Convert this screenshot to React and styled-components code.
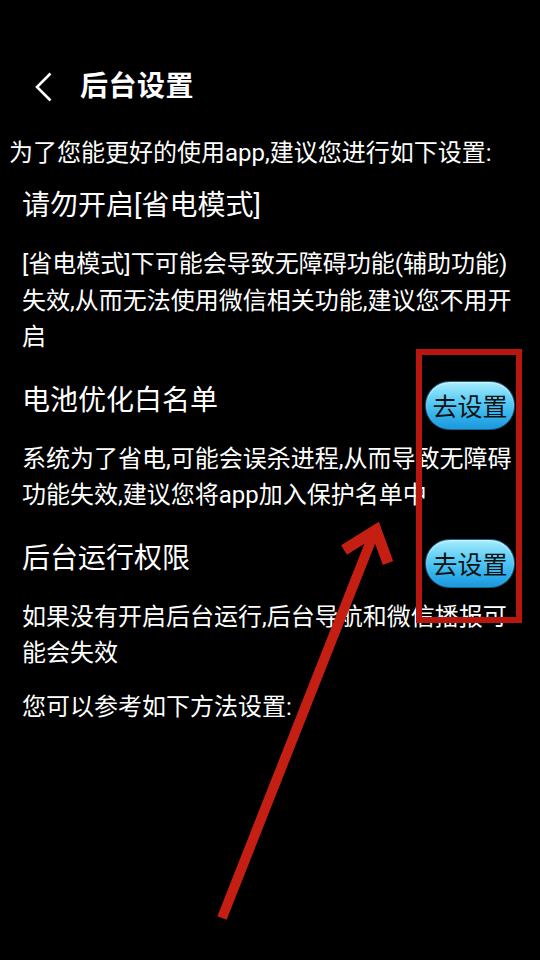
import React from "react";
import styled, { createGlobalStyle } from "styled-components";

const GlobalStyle = createGlobalStyle`
  html, body {
    margin: 0;
    padding: 0;
    background: #000;
  }
  body {
    font-family: Roboto, "Noto Sans CJK SC", sans-serif;
    color: #fff;
  }
`;

const Page = styled.div`
  position: relative;
  width: 540px;
  height: 960px;
  overflow: hidden;
  background: #000;
  padding-top: 57px;
  box-sizing: border-box;
`;

const Header = styled.div`
  display: flex;
  align-items: center;
  height: 60px;
  padding-left: 35px;
  gap: 28px;
`;

const BackIcon = styled.svg`
  width: 17px;
  height: 30px;
  display: block;
`;

const Title = styled.h1`
  margin: 0;
  font-size: 28px;
  font-weight: 700;
  line-height: 40px;
  letter-spacing: 0.5px;
`;

const Intro = styled.p`
  margin: 18px 0 0;
  padding-left: 9px;
  font-size: 24px;
  line-height: 36px;
`;

const Sections = styled.div`
  display: flex;
  flex-direction: column;
  gap: 25px;
  padding: 15px 25px 0 22px;
`;

const Section = styled.div`
  display: flex;
  flex-direction: column;
  gap: 11px;
`;

const SectionHead = styled.div`
  display: flex;
  justify-content: space-between;
  align-items: flex-start;
  min-height: 49px;
`;

const SectionTitle = styled.h2`
  margin: 0;
  font-size: 28px;
  font-weight: 400;
  line-height: 40px;
`;

const SetButton = styled.button`
  width: 90px;
  height: 49px;
  border-radius: 25px;
  border: 1px solid #17628f;
  background: linear-gradient(180deg, #a6ecfb 0%, #5ccdf6 40%, #2eaeea 75%, #1c97dc 100%);
  color: #111;
  font-family: "Noto Sans CJK SC", sans-serif;
  font-size: 25px;
  padding: 0;
  line-height: 1;
  box-shadow: inset 0 1px 2px rgba(255, 255, 255, 0.6);
`;

const Body = styled.p`
  margin: 0;
  font-size: 24px;
  line-height: 36.5px;
`;

const Note = styled.p`
  margin: 17px 0 0;
  padding-left: 22px;
  font-size: 24px;
  line-height: 36px;
`;

const MarkBox = styled.div`
  position: absolute;
  left: 416px;
  top: 349px;
  width: 106px;
  height: 274px;
  box-sizing: border-box;
  border: 6px solid #b8170f;
  pointer-events: none;
`;

const ArrowLayer = styled.svg`
  position: absolute;
  left: 0;
  top: 0;
  width: 540px;
  height: 960px;
  pointer-events: none;
`;

const sections = [
  {
    title: "请勿开启[省电模式]",
    lines: [
      "[省电模式]下可能会导致无障碍功能(辅助功能)",
      "失效,从而无法使用微信相关功能,建议您不用开",
      "启",
    ],
  },
  {
    title: "电池优化白名单",
    action: true,
    lines: ["系统为了省电,可能会误杀进程,从而导致无障碍", "功能失效,建议您将app加入保护名单中"],
  },
  {
    title: "后台运行权限",
    action: true,
    lines: ["如果没有开启后台运行,后台导航和微信播报可", "能会失效"],
  },
];

const App = () => {
  return (
    <Page>
      <GlobalStyle />
      <Header>
        <BackIcon viewBox="0 0 17 30">
          <polyline points="15.5,1.5 2,15 15.5,28.5" fill="none" stroke="#fff" strokeWidth="2.6" />
        </BackIcon>
        <Title>后台设置</Title>
      </Header>

      <Intro>为了您能更好的使用app,建议您进行如下设置:</Intro>

      <Sections>
        {sections.map((s) => (
          <Section key={s.title}>
            <SectionHead>
              <SectionTitle>{s.title}</SectionTitle>
              {s.action && <SetButton>去设置</SetButton>}
            </SectionHead>
            <Body>
              {s.lines.map((l, i) => (
                <React.Fragment key={i}>
                  {i > 0 && <br />}
                  {l}
                </React.Fragment>
              ))}
            </Body>
          </Section>
        ))}
      </Sections>

      <Note>您可以参考如下方法设置:</Note>

      {/* annotation overlay */}
      <MarkBox />
      <ArrowLayer viewBox="0 0 540 960">
        <line x1="222" y1="918" x2="374" y2="533" stroke="#c41f12" strokeWidth="10" />
        <polyline
          points="344,550 376,530 388,563"
          fill="none"
          stroke="#c41f12"
          strokeWidth="11"
          strokeLinejoin="miter"
        />
      </ArrowLayer>
    </Page>
  );
};

export default App;
